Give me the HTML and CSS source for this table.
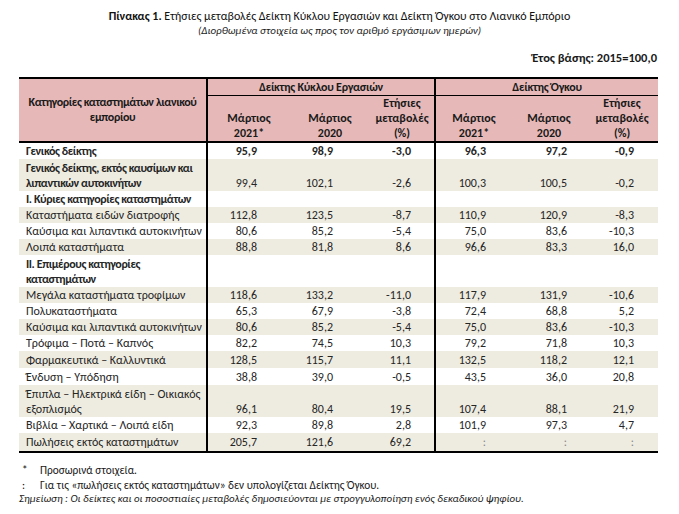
FILE: index.html
```html
<!DOCTYPE html>
<html lang="el">
<head>
<meta charset="utf-8">
<title>Πίνακας 1</title>
<link rel="stylesheet" href="styles.css">
</head>
<body>
<div class="page">
  <div class="title"><b>Πίνακας 1.</b> Ετήσιες μεταβολές Δείκτη Κύκλου Εργασιών και Δείκτη Όγκου στο Λιανικό Εμπόριο</div>
  <div class="subtitle">(Διορθωμένα στοιχεία ως προς τον αριθμό εργάσιμων ημερών)</div>
  <div class="base">Έτος βάσης: 2015=100,0</div>
  <table class="tbl">
    <colgroup>
      <col class="w-cat"><col class="w-c1"><col class="w-c2"><col class="w-c3"><col class="w-c4"><col class="w-c5"><col class="w-c6">
    </colgroup>
    <thead>
      <tr>
        <th rowspan="2" class="h-cat">Κατηγορίες καταστημάτων λιανικού<br>εμπορίου</th>
        <th colspan="3" class="h-grp sep">Δείκτης Κύκλου Εργασιών</th>
        <th colspan="3" class="h-grp">Δείκτης Όγκου</th>
      </tr>
      <tr class="h-sub">
        <th>Μάρτιος<br>2021*</th>
        <th>Μάρτιος<br>2020</th>
        <th class="sep">Ετήσιες<br>μεταβολές<br>(%)</th>
        <th>Μάρτιος<br>2021*</th>
        <th>Μάρτιος<br>2020</th>
        <th>Ετήσιες<br>μεταβολές<br>(%)</th>
      </tr>
    </thead>
    <tbody>
      <tr class="bold">
        <td class="cat b">Γενικός δείκτης</td>
        <td class="n1">95,9</td><td class="n2">98,9</td><td class="n3 sep">-3,0</td>
        <td class="n4">96,3</td><td class="n5">97,2</td><td class="n6">-0,9</td>
      </tr>
      <tr class="shade dbl">
        <td class="cat b">Γενικός δείκτης, εκτός καυσίμων και<br>λιπαντικών αυτοκινήτων</td>
        <td class="n1">99,4</td><td class="n2">102,1</td><td class="n3 sep">-2,6</td>
        <td class="n4">100,3</td><td class="n5">100,5</td><td class="n6">-0,2</td>
      </tr>
      <tr>
        <td class="cat b">I. Κύριες κατηγορίες καταστημάτων</td>
        <td class="n1"></td><td class="n2"></td><td class="n3 sep"></td>
        <td class="n4"></td><td class="n5"></td><td class="n6"></td>
      </tr>
      <tr class="shade">
        <td class="cat">Καταστήματα ειδών διατροφής</td>
        <td class="n1">112,8</td><td class="n2">123,5</td><td class="n3 sep">-8,7</td>
        <td class="n4">110,9</td><td class="n5">120,9</td><td class="n6">-8,3</td>
      </tr>
      <tr>
        <td class="cat">Καύσιμα και λιπαντικά αυτοκινήτων</td>
        <td class="n1">80,6</td><td class="n2">85,2</td><td class="n3 sep">-5,4</td>
        <td class="n4">75,0</td><td class="n5">83,6</td><td class="n6">-10,3</td>
      </tr>
      <tr class="shade">
        <td class="cat">Λοιπά καταστήματα</td>
        <td class="n1">88,8</td><td class="n2">81,8</td><td class="n3 sep">8,6</td>
        <td class="n4">96,6</td><td class="n5">83,3</td><td class="n6">16,0</td>
      </tr>
      <tr class="dbl">
        <td class="cat b">II. Επιμέρους κατηγορίες<br>καταστημάτων</td>
        <td class="n1"></td><td class="n2"></td><td class="n3 sep"></td>
        <td class="n4"></td><td class="n5"></td><td class="n6"></td>
      </tr>
      <tr class="shade">
        <td class="cat">Μεγάλα καταστήματα τροφίμων</td>
        <td class="n1">118,6</td><td class="n2">133,2</td><td class="n3 sep">-11,0</td>
        <td class="n4">117,9</td><td class="n5">131,9</td><td class="n6">-10,6</td>
      </tr>
      <tr>
        <td class="cat">Πολυκαταστήματα</td>
        <td class="n1">65,3</td><td class="n2">67,9</td><td class="n3 sep">-3,8</td>
        <td class="n4">72,4</td><td class="n5">68,8</td><td class="n6">5,2</td>
      </tr>
      <tr class="shade">
        <td class="cat">Καύσιμα και λιπαντικά αυτοκινήτων</td>
        <td class="n1">80,6</td><td class="n2">85,2</td><td class="n3 sep">-5,4</td>
        <td class="n4">75,0</td><td class="n5">83,6</td><td class="n6">-10,3</td>
      </tr>
      <tr>
        <td class="cat">Τρόφιμα – Ποτά – Καπνός</td>
        <td class="n1">82,2</td><td class="n2">74,5</td><td class="n3 sep">10,3</td>
        <td class="n4">79,2</td><td class="n5">71,8</td><td class="n6">10,3</td>
      </tr>
      <tr class="shade tall">
        <td class="cat">Φαρμακευτικά – Καλλυντικά</td>
        <td class="n1">128,5</td><td class="n2">115,7</td><td class="n3 sep">11,1</td>
        <td class="n4">132,5</td><td class="n5">118,2</td><td class="n6">12,1</td>
      </tr>
      <tr class="tall">
        <td class="cat">Ένδυση – Υπόδηση</td>
        <td class="n1">38,8</td><td class="n2">39,0</td><td class="n3 sep">-0,5</td>
        <td class="n4">43,5</td><td class="n5">36,0</td><td class="n6">20,8</td>
      </tr>
      <tr class="shade dbl">
        <td class="cat">Έπιπλα – Ηλεκτρικά είδη – Οικιακός<br>εξοπλισμός</td>
        <td class="n1">96,1</td><td class="n2">80,4</td><td class="n3 sep">19,5</td>
        <td class="n4">107,4</td><td class="n5">88,1</td><td class="n6">21,9</td>
      </tr>
      <tr>
        <td class="cat">Βιβλία – Χαρτικά – Λοιπά είδη</td>
        <td class="n1">92,3</td><td class="n2">89,8</td><td class="n3 sep">2,8</td>
        <td class="n4">101,9</td><td class="n5">97,3</td><td class="n6">4,7</td>
      </tr>
      <tr class="shade last">
        <td class="cat">Πωλήσεις εκτός καταστημάτων</td>
        <td class="n1">205,7</td><td class="n2">121,6</td><td class="n3 sep">69,2</td>
        <td class="n4 colon">:</td><td class="n5 colon">:</td><td class="n6 colon">:</td>
      </tr>
    </tbody>
  </table>
  <div class="notes">
    <div class="note"><span class="mark">*</span><span>Προσωρινά στοιχεία.</span></div>
    <div class="note"><span class="mark">:</span><span>Για τις «πωλήσεις εκτός καταστημάτων» δεν υπολογίζεται Δείκτης Όγκου.</span></div>
    <div class="note it">Σημείωση : Οι δείκτες και οι ποσοστιαίες μεταβολές δημοσιεύονται με στρογγυλοποίηση ενός δεκαδικού ψηφίου.</div>
  </div>
</div>
</body>
</html>
```

FILE: styles.css
```css
html, body {
  margin: 0;
  padding: 0;
  background: #ffffff;
}
body {
  font-family: "Carlito", "Lato", "Noto Sans", sans-serif;
  color: #1a1a1a;
}
.page {
  width: 679px;
  padding-top: 9px;
}
.title {
  text-align: center;
  font-size: 12px;
  line-height: 15px;
  color: #111;
}
.subtitle {
  text-align: center;
  font-size: 11px;
  line-height: 13px;
  font-style: italic;
  color: #222;
}
.base {
  text-align: right;
  font-size: 12.5px;
  font-weight: bold;
  line-height: 15px;
  padding-right: 22px;
  margin-top: 13px;
  margin-bottom: 12px;
}
.tbl {
  margin-left: 19px;
  width: 639px;
  border-collapse: separate;
  border-spacing: 0;
  table-layout: fixed;
  font-size: 12px;
  border-top: 2px solid #000;
  border-bottom: 2px solid #000;
}
.w-cat { width: 189px; }
.w-c1 { width: 82px; }
.w-c2 { width: 80px; }
.w-c3 { width: 66px; }
.w-c4 { width: 76px; }
.w-c5 { width: 74px; }
.w-c6 { width: 72px; }

thead th {
  background: #e6b9b8;
  font-weight: bold;
  color: #1a1a1a;
  padding: 0;
}
.h-cat {
  border-right: 2px solid #000;
  border-bottom: 2px solid #000;
  line-height: 15px;
  vertical-align: middle;
  text-align: center;
  letter-spacing: -0.4px;
}
.h-grp {
  height: 16px;
  line-height: 16px;
  border-bottom: 1px solid #000;
  text-align: center;
  letter-spacing: -0.25px;
}
.h-sub th {
  line-height: 15px;
  vertical-align: bottom;
  text-align: center;
  border-bottom: 2px solid #000;
  height: 45px;
}
.sep { border-right: 2px solid #000; }

tbody td {
  padding: 1px 0 0 0;
  line-height: 15px;
  vertical-align: bottom;
  text-align: right;
  color: #262626;
  white-space: nowrap;
}
tbody tr.dbl td { padding-top: 2px; }
tbody tr.tall td { padding-top: 2px; }
tbody tr.last td { padding-top: 2px; padding-bottom: 1px; }
tbody tr.shade td { background: #eeece1; }
tbody td.cat {
  text-align: left;
  padding-left: 7px;
  border-right: 2px solid #000;
}
.bold td { font-weight: bold; }
td.b {
  font-weight: bold;
  letter-spacing: -0.4px;
}
.n1 { padding-right: 33px; }
.n2 { padding-right: 37px; }
.n3 { padding-right: 23px; }
.n4 { padding-right: 26px; }
.n5 { padding-right: 19px; }
.n6 { padding-right: 24px; }
td.colon { color: #888; }

.notes {
  margin-top: 10px;
  font-size: 11.3px;
  line-height: 14.5px;
  color: #1a1a1a;
}
.note {
  display: flex;
  padding-left: 22px;
}
.note .mark {
  width: 18px;
  flex: none;
}
.note.it {
  font-style: italic;
  font-size: 10.9px;
  padding-left: 19px;
}
```
